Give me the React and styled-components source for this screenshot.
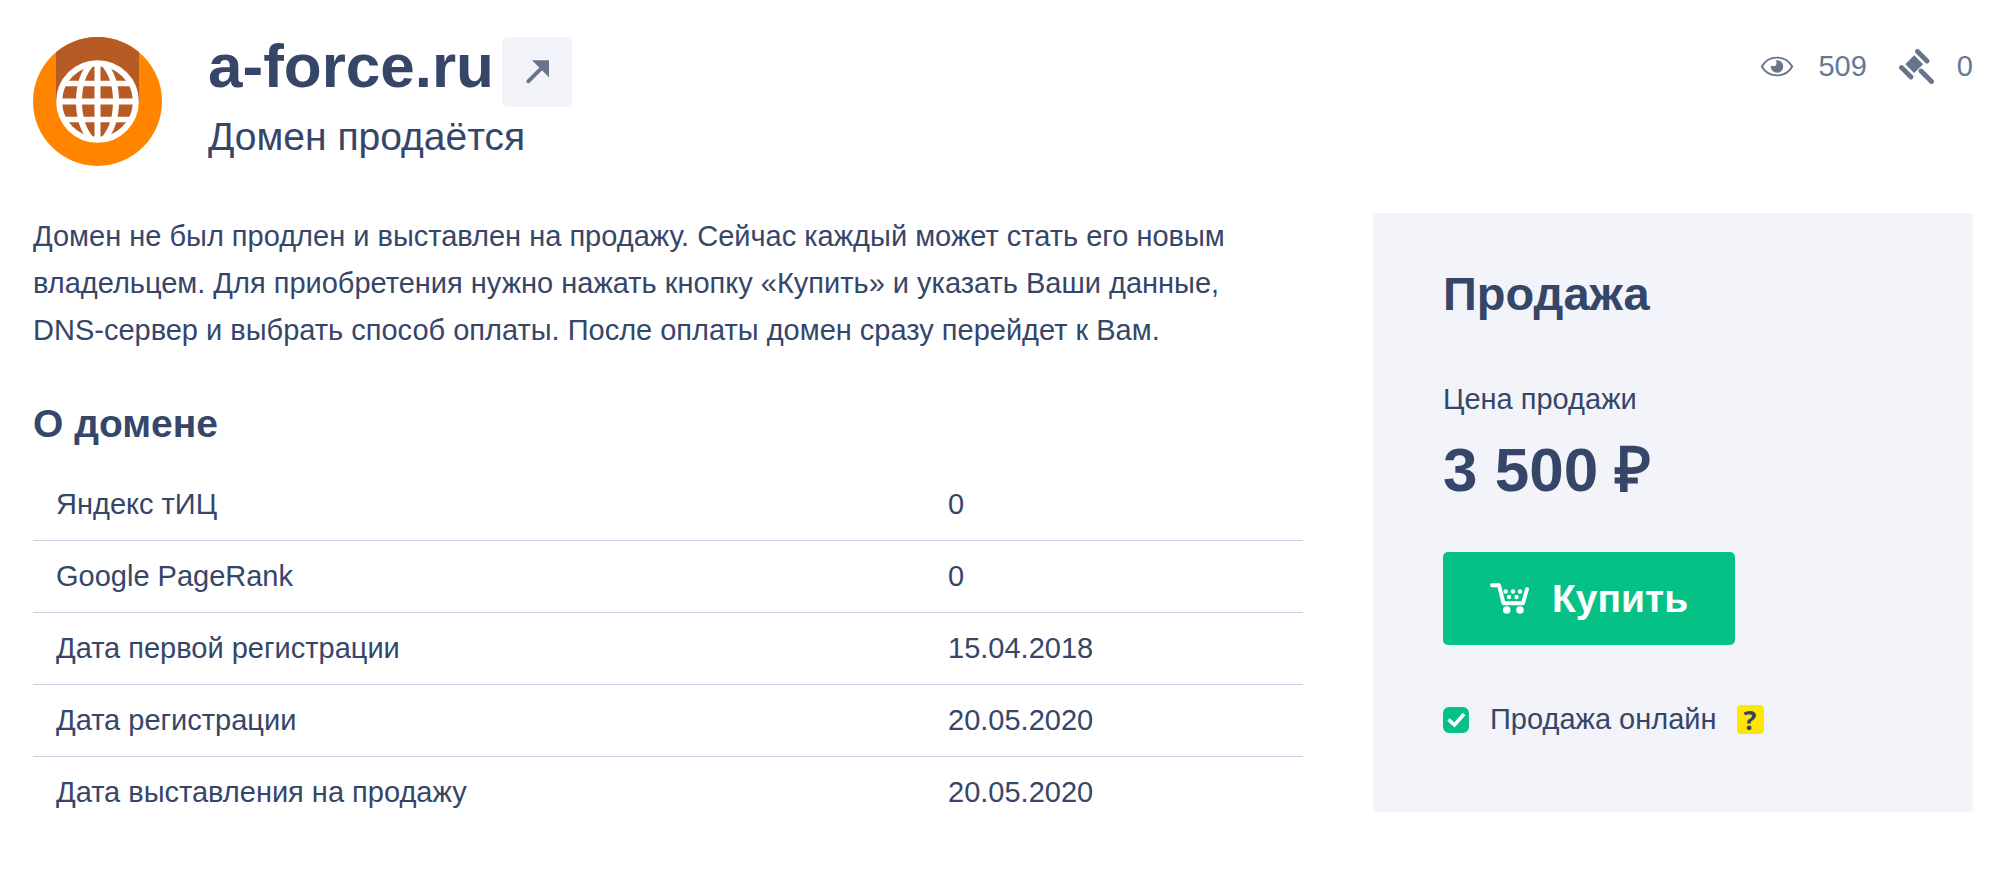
import React, { useState } from "react";
import styled, { createGlobalStyle } from "styled-components";

const GlobalStyle = createGlobalStyle`
  * {
    box-sizing: border-box;
  }

  body {
    margin: 0;
    background: #fff;
    color: #364669;
    font-family: "Liberation Sans", Arial, sans-serif;
    font-size: 29px;
    line-height: 47px;
  }
`;

const Page = styled.div`
  padding: 37px 27px 56px 33px;
`;

const Header = styled.header`
  display: flex;
  align-items: flex-start;
  gap: 46px;
  margin-bottom: 47px;
`;

const Avatar = styled.svg`
  flex: none;
  width: 129px;
  height: 129px;
`;

const HeaderText = styled.div`
  flex: 1;
`;

const TitleRow = styled.div`
  display: flex;
  align-items: flex-start;
  gap: 8px;
  margin-bottom: 6px;
`;

const Title = styled.h1`
  margin: 0;
  font-size: 62px;
  line-height: 58px;
`;

const VisitLink = styled.a`
  width: 70px;
  height: 70px;
  border-radius: 6px;
  background: #f3f4f9;
  color: #69748c;
`;

const Subtitle = styled.p`
  margin: 0;
  font-size: 39px;
`;

const Stats = styled.div`
  display: flex;
  gap: 32px;
  color: #647898;
  line-height: 58px;
`;

const Stat = styled.div`
  display: flex;
  align-items: center;
  gap: 23px;

  svg {
    color: #69748c;
  }
`;

const Columns = styled.div`
  display: grid;
  grid-template-columns: minmax(0, 1fr) 600px;
  align-items: start;
  gap: 70px;
`;

const Description = styled.p`
  margin: 0 0 46px;
  padding-right: 47px;
`;

const SectionTitle = styled.h2`
  margin: 0 0 22px;
  font-size: 39px;
`;

const Table = styled.table`
  width: 100%;
  border-collapse: separate;
  border-spacing: 0;
`;

const Row = styled.tr`
  &:not(:last-child) > * {
    border-bottom: 1px solid #c6d0e0;
  }
`;

const NameCell = styled.th`
  width: 70%;
  padding: 12px 23px;
  font-weight: normal;
  text-align: left;
`;

const ValueCell = styled.td`
  padding: 12px 26px;
`;

const Panel = styled.aside`
  padding: 57px 70px 69px;
  border-radius: 3px;
  background: #f2f4f9;
`;

const PanelTitle = styled.h2`
  margin: 0 0 59px;
  font-size: 47px;
`;

const Price = styled.div`
  margin: 12px 0 47px;
  font-size: 62px;
  font-weight: bold;
  line-height: 70px;
`;

const BuyButton = styled.button`
  display: flex;
  align-items: center;
  gap: 23px;
  height: 93px;
  margin-bottom: 51px;
  padding: 0 47px;
  border: 0;
  border-radius: 5px;
  background: #06c186;
  color: #fff;
  font: bold 39px/47px "Liberation Sans", Arial, sans-serif;
  cursor: pointer;
`;

const OnlineRow = styled.div`
  display: flex;
  align-items: center;
  gap: 20px;
`;

const OnlineLabel = styled.label`
  display: flex;
  align-items: center;
  gap: 21px;
`;

const CheckWrap = styled.span`
  display: grid;
  width: 26px;
  height: 26px;

  > * {
    grid-area: 1 / 1;
  }

  svg {
    pointer-events: none;
    visibility: ${props => (props.$checked ? "visible" : "hidden")};
  }
`;

const Checkbox = styled.input`
  appearance: none;
  width: 26px;
  height: 26px;
  margin: 0;
  border: 2px solid #06c186;
  border-radius: 6px;
  background: ${props => (props.checked ? "#06c186" : "#fff")};
`;

const HelpButton = styled.button`
  width: 27px;
  height: 29px;
  padding: 0;
  border: 0;
  border-radius: 4px;
  background: #ffe600;
  color: #364463;
  font: bold 27px/29px "Open Sans", "Noto Sans", sans-serif;
`;

const GlobeLogo = () => (
  <Avatar viewBox="0 0 129 129" aria-hidden="true">
    <clipPath id="logo-circle">
      <circle cx="64.5" cy="64.5" r="64.5" />
    </clipPath>
    <g clipPath="url(#logo-circle)">
      <rect width="129" height="129" fill="#ff8500" />
      <rect x="23" width="83" height="64.5" fill="#b75b25" />
    </g>
    <circle cx="64.5" cy="64.5" r="38.5" fill="#b75b25" />
    <g fill="none" stroke="#fff" strokeWidth="6">
      <circle cx="64.5" cy="64.5" r="38.3" />
      <path d="M64.5 26v77M26 64.5h77" />
      <path d="M31 46.500h67M31 82.500h67" strokeWidth="5.300" />
      <path d="M58 27C42 45 42 84 58 102M71 27C87 45 87 84 71 102" />
    </g>
  </Avatar>
);

const ArrowIcon = () => (
  <svg width="70" height="70" viewBox="0 0 70 70" aria-hidden="true">
    <path d="M30 23.300h17v17z" fill="currentColor" />
    <path
      d="M26.300 44.300l15-15"
      stroke="currentColor"
      strokeWidth="3.800"
      strokeLinecap="round"
    />
  </svg>
);

const EyeIcon = () => (
  <svg width="35" height="35" viewBox="0 0 35 35" aria-hidden="true">
    <path
      d="M1.800 17.500C5.500 11 11 8.600 17 8.600S28.500 11 32.200 17.500C28.500 24 23 26.400 17 26.400S5.500 24 1.800 17.500z"
      fill="none"
      stroke="currentColor"
      strokeWidth="1.900"
      strokeLinejoin="round"
    />
    <circle cx="17" cy="17.500" r="6.200" fill="currentColor" />
    <circle cx="13.300" cy="14" r="3.200" fill="#fff" />
  </svg>
);

const GavelIcon = () => (
  <svg width="35" height="35" viewBox="0 0 35 35" aria-hidden="true">
    <g stroke="currentColor" strokeWidth="4.800" strokeLinecap="round">
      <path d="M18.500 2.500l9.500 9.500M2.500 18.500l9.500 9.500" />
      <path d="M22 22l10.500 10.500" />
    </g>
    <path d="M15.200 6.300l8.900 8.900-8.900 8.900-8.900-8.900z" fill="currentColor" />
  </svg>
);

const CartIcon = () => (
  <svg width="39" height="31" viewBox="0 0 39 31" fill="#fff" aria-hidden="true">
    <path
      d="M2 2.200h7l4.500 18h19.500l4-14"
      fill="none"
      stroke="#fff"
      strokeWidth="3.900"
      strokeLinecap="round"
      strokeLinejoin="round"
    />
    <circle cx="16.700" cy="27" r="3.800" />
    <circle cx="30" cy="27" r="3.800" />
    <circle cx="15.700" cy="8.500" r="2.200" />
    <circle cx="23" cy="8.500" r="2.200" />
    <circle cx="30" cy="8.500" r="2.200" />
    <circle cx="19" cy="14" r="2.200" />
    <circle cx="26.500" cy="14" r="2.200" />
  </svg>
);

const domainInfo = [
  { name: "Яндекс тИЦ", value: "0" },
  { name: "Google PageRank", value: "0" },
  { name: "Дата первой регистрации", value: "15.04.2018" },
  { name: "Дата регистрации", value: "20.05.2020" },
  { name: "Дата выставления на продажу", value: "20.05.2020" }
];

const App = () => {
  const [online, setOnline] = useState(true);

  return (
    <Page>
      <GlobalStyle />
      <Header>
        <GlobeLogo />
        <HeaderText>
          <TitleRow>
            <Title>a-force.ru</Title>
            <VisitLink href="#" aria-label="Открыть сайт">
              <ArrowIcon />
            </VisitLink>
          </TitleRow>
          <Subtitle>Домен продаётся</Subtitle>
        </HeaderText>
        <Stats>
          <Stat>
            <EyeIcon />
            509
          </Stat>
          <Stat>
            <GavelIcon />0
          </Stat>
        </Stats>
      </Header>
      <Columns>
        <main>
          <Description>
            Домен не был продлен и выставлен на продажу. Сейчас каждый может
            стать его новым владельцем. Для приобретения нужно нажать кнопку
            «Купить» и указать Ваши данные, DNS-сервер и выбрать способ оплаты.
            После оплаты домен сразу перейдет к Вам.
          </Description>
          <SectionTitle>О домене</SectionTitle>
          <Table>
            <tbody>
              {domainInfo.map(item => (
                <Row key={item.name}>
                  <NameCell scope="row">{item.name}</NameCell>
                  <ValueCell>{item.value}</ValueCell>
                </Row>
              ))}
            </tbody>
          </Table>
        </main>
        <Panel>
          <PanelTitle>Продажа</PanelTitle>
          <div>Цена продажи</div>
          <Price>3 500 ₽</Price>
          <BuyButton type="button">
            <CartIcon />
            Купить
          </BuyButton>
          <OnlineRow>
            <OnlineLabel htmlFor="online">
              <CheckWrap $checked={online}>
                <Checkbox
                  id="online"
                  type="checkbox"
                  checked={online}
                  onChange={e => setOnline(e.target.checked)}
                />
                <svg width="26" height="26" viewBox="0 0 26 26" aria-hidden="true">
                  <path
                    d="M5.500 12.500l6 5.500 9.500-11"
                    fill="none"
                    stroke="#fff"
                    strokeWidth="3.600"
                  />
                </svg>
              </CheckWrap>
              Продажа онлайн
            </OnlineLabel>
            <HelpButton type="button">?</HelpButton>
          </OnlineRow>
        </Panel>
      </Columns>
    </Page>
  );
};

export default App;
